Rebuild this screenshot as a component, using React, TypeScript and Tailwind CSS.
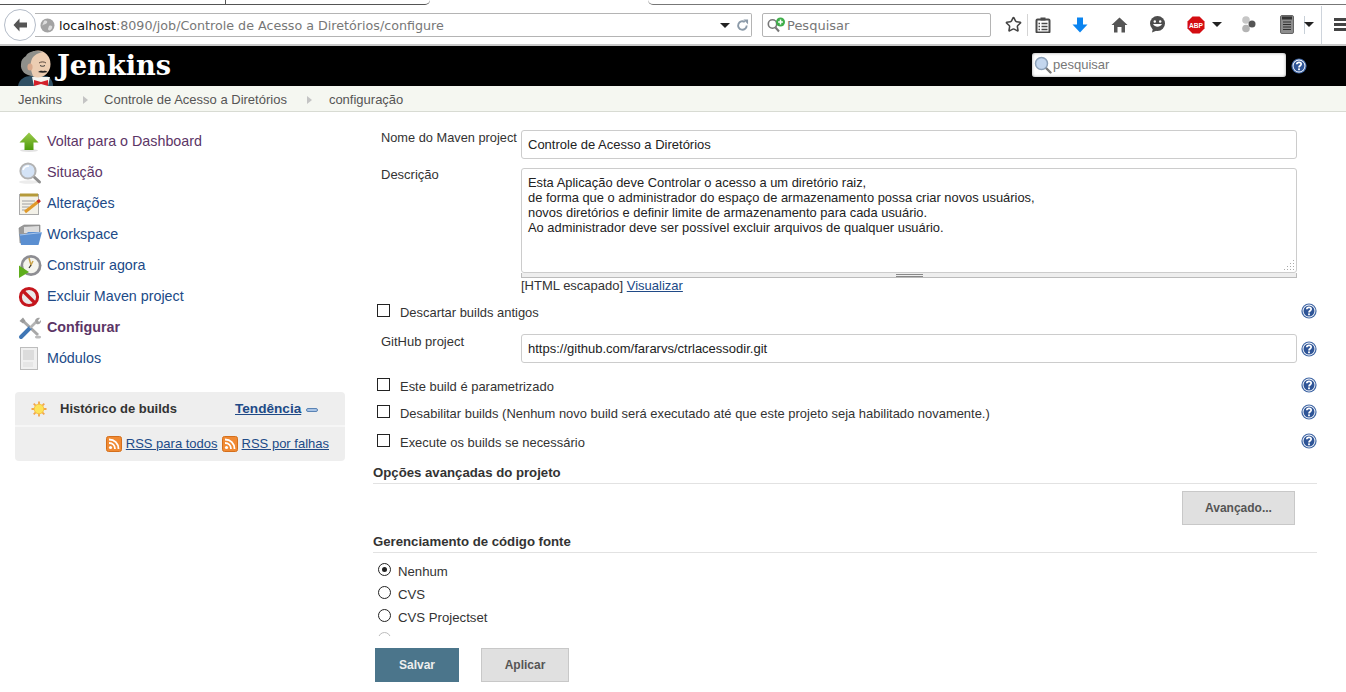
import { Star } from "lucide-react";
import type { ReactNode } from "react";

const sans = "font-['Liberation_Sans',Arial,sans-serif]";

function Butler() {
  return (
    <svg width="36" height="36" viewBox="0 0 36 36" className="block">
      <path d="M1 36 C2 29 8 26 14 26 L30 26 C34 28 36 32 36 36 Z" fill="#2f4f63" />
      <path d="M15 27 L33 27 L31 36 L17 36 Z" fill="#f4f4f0" />
      <path d="M17 30 L24 32 L31 30 L31 36 L24 34 L17 36 Z" fill="#d3202a" />
      <ellipse cx="21" cy="14" rx="12.5" ry="13.5" fill="#eccdb2" />
      <path d="M9 6 C11 1 20 0 26 2 C20 3 15 6 14 12 C13 15 14 21 16 26 C9 26 3 21 4 14 C4 10 6 8 9 6 Z" fill="#8f8f8a" />
      <ellipse cx="13" cy="17" rx="2.6" ry="3.6" fill="#d9a98c" />
      <path d="M22 13 C24 11.5 27 11.5 29 13" stroke="#4a3a30" strokeWidth="0.9" fill="none" />
      <path d="M23 15.5 C24.5 16.5 26.5 16.5 28 15.5" stroke="#333" strokeWidth="1" fill="none" />
      <path d="M21 22 C23 20.5 25 20.5 26 21.2 C27.5 20.5 29 20.5 30.5 22 C28 22.8 24 23 21 22 Z" fill="#222" />
    </svg>
  );
}

function Help() {
  return (
    <svg width="16" height="16" viewBox="0 0 16 16" className="block shrink-0">
      <circle cx="8" cy="8" r="7.6" fill="#3f66a5" />
      <circle cx="8" cy="8" r="6.4" fill="#fff" />
      <circle cx="8" cy="8" r="5.5" fill="#2f5597" />
      <path d="M5.8 6.2 C5.9 3.7 10.2 3.7 10.2 6.1 C10.2 7.8 8 7.7 8 9.4" stroke="#fff" strokeWidth="1.7" fill="none" />
      <rect x="7.1" y="10.4" width="1.8" height="1.8" fill="#fff" />
    </svg>
  );
}

function Rss() {
  return (
    <svg width="16" height="16" viewBox="0 0 16 16" className="block shrink-0">
      <rect x="0.5" y="0.5" width="15" height="15" rx="2" fill="#f08a33" stroke="#d46f1c" />
      <circle cx="4.5" cy="11.5" r="1.6" fill="#fff" />
      <path d="M3 7 C6.5 7 9 9.5 9 13" stroke="#fff" strokeWidth="1.8" fill="none" />
      <path d="M3 3.5 C8.5 3.5 12.5 7.5 12.5 13" stroke="#fff" strokeWidth="1.8" fill="none" />
    </svg>
  );
}

function SideIcon({ name }: { name: string }) {
  if (name === "up")
    return (
      <svg width="24" height="24" viewBox="0 0 24 24">
        <defs>
          <linearGradient id="upg" x1="0" y1="0" x2="0" y2="1">
            <stop offset="0" stopColor="#9ccc4c" />
            <stop offset="1" stopColor="#4c9a0a" />
          </linearGradient>
        </defs>
        <ellipse cx="11" cy="20.5" rx="9" ry="1.5" fill="#e2e2e2" />
        <path d="M11 2.5 L20.5 12.5 L15.5 12.5 L15.5 20 L6.5 20 L6.5 12.5 L1.5 12.5 Z" fill="url(#upg)" />
      </svg>
    );
  if (name === "search")
    return (
      <svg width="24" height="24" viewBox="0 0 24 24">
        <ellipse cx="11" cy="21" rx="10" ry="1.8" fill="#ececec" />
        <path d="M15 15 L21.5 21" stroke="#8f8f8f" strokeWidth="3" strokeLinecap="round" />
        <circle cx="10" cy="10" r="7.6" fill="#d4e3f6" stroke="#b3b3b3" strokeWidth="2" />
        <path d="M5 9 C6 6 8 5 11 5" stroke="#fff" strokeWidth="1.6" fill="none" />
      </svg>
    );
  if (name === "notes")
    return (
      <svg width="24" height="24" viewBox="0 0 24 24">
        <rect x="1.5" y="2.5" width="19" height="20" fill="#f3f1e8" stroke="#a9a9a9" />
        <rect x="2" y="1.5" width="18" height="3" fill="#b59a3a" />
        <path d="M4 9 H17 M4 12 H15 M4 15 H11 M4 18 H9" stroke="#a0a0a0" />
        <path d="M7 20 L21 9" stroke="#e09a2a" strokeWidth="3" />
        <path d="M19.5 10.2 L22 8.2" stroke="#c9302c" strokeWidth="3" />
      </svg>
    );
  if (name === "folder")
    return (
      <svg width="24" height="24" viewBox="0 0 24 24">
        <path d="M1 5 L6 2 L22 2 L22 12 L2 20 Z" fill="#9a9a9a" stroke="#808080" strokeWidth="0.6" />
        <path d="M6 4 L21 3 L21 10 L6 10 Z" fill="#dcdcdc" />
        <path d="M3 22 L1.5 11 L8 11 L10 9 L24 9 L20.5 22 Z" fill="#5b8fd1" />
        <path d="M2 12 L24 9.5" stroke="#a8c6ec" />
      </svg>
    );
  if (name === "build")
    return (
      <svg width="24" height="24" viewBox="0 0 24 24">
        <circle cx="13" cy="11.5" r="10.5" fill="#8d8d92" />
        <circle cx="13" cy="11.5" r="7.8" fill="#f4f4ee" />
        <path d="M11 4 L13 11 L15 7" stroke="#c9a34a" strokeWidth="1.5" fill="none" />
        <path d="M13 11 L11 14" stroke="#333" strokeWidth="1.2" />
        <path d="M1 11.5 L11 18 L1 24 Z" fill="#5fae1c" />
      </svg>
    );
  if (name === "delete")
    return (
      <svg width="24" height="24" viewBox="0 0 24 24">
        <circle cx="11" cy="12" r="8.6" fill="#e9e9e9" stroke="#c5161d" strokeWidth="3" />
        <path d="M5 6 L17 18" stroke="#c5161d" strokeWidth="3.2" />
      </svg>
    );
  if (name === "config")
    return (
      <svg width="24" height="24" viewBox="0 0 24 24">
        <path d="M4 4 L20 19" stroke="#a8a8a8" strokeWidth="3" />
        <path d="M1.5 5 L5 1.5 L7.5 5 L5 7.5 Z" fill="#9b9b9b" />
        <path d="M3 21 L12 12" stroke="#3f76b5" strokeWidth="4" strokeLinecap="round" />
        <path d="M12 12 L19 5" stroke="#b4b4b4" strokeWidth="2.6" />
        <path d="M17 5 C17 2.5 20 1 22 2 L20 4.5 L21 6 L23 4 C23.5 7 21 9 18.5 8 Z" fill="#a2a2a2" />
        <ellipse cx="20" cy="21" rx="3" ry="1.5" fill="#bcbcbc" />
      </svg>
    );
  return (
    <svg width="24" height="24" viewBox="0 0 24 24">
      <rect x="2.5" y="0.5" width="17" height="22" fill="#f0f0f0" stroke="#bdbdbd" />
      <rect x="5" y="3" width="11" height="10" fill="#dcdcdc" />
      <rect x="5" y="15" width="10" height="5" fill="#e6e6e6" />
    </svg>
  );
}

function Sun() {
  return (
    <svg width="16" height="16" viewBox="0 0 16 16" className="block">
      <path d="M8 0.5 V15.5 M0.5 8 H15.5 M2.7 2.7 L13.3 13.3 M13.3 2.7 L2.7 13.3" stroke="#f2a54a" strokeWidth="1.8" />
      <circle cx="8" cy="8" r="4.8" fill="#fde35a" stroke="#f5c542" />
    </svg>
  );
}

function SideItem({ icon, label, color, bold }: { icon: string; label: string; color: string; bold?: boolean }) {
  return (
    <div className="flex h-[31px] items-center gap-[5px] pl-[3px]">
      <SideIcon name={icon} />
      <span className={`text-[14.3px] ${color} ${bold ? "font-bold" : ""}`}>{label}</span>
    </div>
  );
}

function Tool({ w, children }: { w: string; children: ReactNode }) {
  return <div className={`flex shrink-0 items-center justify-center ${w}`}>{children}</div>;
}

function Caret() {
  return <div className="h-0 w-0 border-x-[5px] border-t-[5px] border-x-transparent border-t-[#222]" />;
}

function Field({ children, className }: { children: ReactNode; className: string }) {
  return (
    <div className={`flex h-[29px] w-[776px] items-center rounded-[3px] border border-[#ccc] px-[6px] text-[13px] text-[#222] ${className}`}>
      {children}
    </div>
  );
}

function CheckRow({ label, className }: { label: string; className: string }) {
  return (
    <div className={`flex h-[26px] items-center pl-1 ${className}`}>
      <span className="h-[13px] w-[13px] shrink-0 -translate-y-[1px] border border-[#222] bg-white" />
      <span className="ml-[10px] flex-1 translate-y-[2px] text-[12.95px] text-[#333]">{label}</span>
      <Help />
    </div>
  );
}

function Radio({ label, on, dim }: { label?: string; on?: boolean; dim?: boolean }) {
  return (
    <div className={`flex h-[23px] items-center pl-[5px] ${dim ? "opacity-30" : ""}`}>
      <span className="flex h-[13px] w-[13px] -translate-y-[1px] items-center justify-center rounded-full border border-[#222] bg-white">
        {on && <span className="h-[5px] w-[5px] rounded-full bg-[#222]" />}
      </span>
      {label && <span className="ml-[7px] translate-y-[1px] text-[13.2px] text-[#333]">{label}</span>}
    </div>
  );
}

function SectionHead({ label, className }: { label: string; className: string }) {
  return (
    <div className={`flex h-[22px] items-start border-b border-[#e2e2e2] pt-[3px] text-[13.2px] font-bold leading-[15px] text-[#333] ${className}`}>
      {label}
    </div>
  );
}

function Browser() {
  return (
    <>
      <div className="flex h-[5px]">
        <div className="h-[5px] w-[225px] border-b border-[#555]" />
        <div className="h-[5px] w-px bg-[#555]" />
        <div className="h-[5px] w-[204px] rounded-br-[6px] border-b border-[#555]" />
        <div className="w-[218px]" />
        <div className="h-[5px] flex-1 rounded-bl-[6px] border-b border-[#777]" />
      </div>
      <div className="flex h-[41px] items-start border-b-2 border-[#c8c8c8] bg-white">
        <div className="z-10 mt-[4px] flex h-[32px] w-[32px] translate-x-[4px] items-center justify-center rounded-full border border-[#b4bcc8] bg-white">
          <svg width="18" height="18" viewBox="0 0 18 18">
            <path d="M8.5 2.5 L2.5 9 L8.5 15.5 L8.5 11.5 L16 11.5 L16 6.5 L8.5 6.5 Z" fill="#555" />
          </svg>
        </div>
        <div className="ml-[3px] mt-[8px] flex h-[24px] w-[717px] items-center rounded-r-[2px] border border-l-0 border-[#b4b4b4] pl-[6px] pt-px font-['DejaVu_Sans',sans-serif] text-[12.7px] text-[#777]">
          <svg width="15" height="15" viewBox="0 0 15 15" className="ml-[-1px] mr-[4px] shrink-0">
            <circle cx="7.5" cy="7.5" r="7" fill="#a3a3a3" />
            <path d="M4 3 C6 2 8 3 7 5 C5 7 3 6 2 8 Z M9 8 C11 7 13 8 12 10 C11 13 8 13 8 11 Z" fill="#dcdcdc" />
          </svg>
          <span className="text-[#111]">localhost</span>
          <span>:8090/job/Controle de Acesso a Diretórios/configure</span>
          <div className="ml-auto mr-[2px] flex items-center gap-[6px]">
            <Caret />
            <svg width="13" height="13" viewBox="0 0 14 14">
              <path d="M11.5 7 A4.6 4.6 0 1 1 9.5 3.2" stroke="#8b9aa8" strokeWidth="2" fill="none" />
              <path d="M8 0.5 L13 0.5 L13 6 Z" fill="#8b9aa8" />
            </svg>
          </div>
        </div>
        <div className="ml-[10px] mt-[8px] flex h-[24px] w-[229px] items-center rounded-[2px] border border-[#b4b4b4] pl-[3px] pt-px font-['DejaVu_Sans',sans-serif] text-[13px] text-[#777]">
          <svg width="20" height="17" viewBox="0 0 20 17" className="mr-[1px] shrink-0">
            <circle cx="6.5" cy="7" r="4.2" fill="none" stroke="#777" strokeWidth="1.6" />
            <path d="M9.5 10.5 L13 14.5" stroke="#777" strokeWidth="2" />
            <circle cx="14.5" cy="5" r="4.5" fill="#3fae49" />
            <path d="M14.5 2.6 V7.4 M12.1 5 H16.9" stroke="#fff" strokeWidth="1.5" />
          </svg>
          Pesquisar
        </div>
        <div className="ml-[8px] flex h-[39px] flex-1 items-center overflow-hidden">
          <Tool w="w-[28px]"><Star size={17} strokeWidth={2.2} color="#444" /></Tool>
          <div className="h-[22px] w-px bg-[#d4d4d4]" />
          <Tool w="w-[31px]">
            <svg width="16" height="16" viewBox="0 0 16 16">
              <rect x="1.5" y="2.5" width="13" height="13" rx="1" fill="#fff" stroke="#4a4a4a" strokeWidth="2" />
              <rect x="5.5" y="0.5" width="5" height="3" fill="#4a4a4a" />
              <path d="M3.5 6.5 H5 M6.5 6.5 H12.5 M3.5 9.5 H5 M6.5 9.5 H12.5 M3.5 12.5 H5 M6.5 12.5 H12.5" stroke="#4a4a4a" strokeWidth="1.6" />
            </svg>
          </Tool>
          <Tool w="w-[44px]">
            <svg width="16" height="16" viewBox="0 0 16 16">
              <path d="M5 0.5 H11 V7.5 H15.5 L8 15.5 L0.5 7.5 H5 Z" fill="#0a84f0" />
            </svg>
          </Tool>
          <Tool w="w-[34px]">
            <svg width="17" height="16" viewBox="0 0 17 16">
              <path d="M8.5 0.5 L16.5 8 L14 8 L14 15.5 L10.5 15.5 L10.5 10 L6.5 10 L6.5 15.5 L3 15.5 L3 8 L0.5 8 Z" fill="#555" />
            </svg>
          </Tool>
          <Tool w="w-[42px]">
            <svg width="17" height="17" viewBox="0 0 17 17">
              <circle cx="8.5" cy="7.5" r="7.5" fill="#4d4d4d" />
              <path d="M4 12 L3 16.5 L9 14 Z" fill="#4d4d4d" />
              <circle cx="5.8" cy="5.5" r="1.2" fill="#fff" />
              <circle cx="11.2" cy="5.5" r="1.2" fill="#fff" />
              <path d="M4 8 C6 11.5 11 11.5 13 8 Z" fill="#fff" />
            </svg>
          </Tool>
          <Tool w="ml-px w-[34px]">
            <svg width="18" height="18" viewBox="0 0 18 18">
              <path d="M5.5 0.5 H12.5 L17.5 5.5 V12.5 L12.5 17.5 H5.5 L0.5 12.5 V5.5 Z" fill="#d40d12" />
              <text x="9" y="11.8" textAnchor="middle" fontSize="8" fontWeight="700" fill="#fff" fontFamily="Liberation Sans, sans-serif" textLength="14" lengthAdjust="spacingAndGlyphs">ABP</text>
            </svg>
          </Tool>
          <Tool w="w-[8px]"><Caret /></Tool>
          <Tool w="w-[54px]">
            <svg width="15" height="17" viewBox="0 0 15 17">
              <circle cx="5" cy="4" r="3.8" fill="#c6c6c6" />
              <circle cx="5" cy="12.5" r="3.8" fill="#b4b4b4" />
              <circle cx="11" cy="8" r="3.5" fill="#555" />
            </svg>
          </Tool>
          <Tool w="w-[24px]">
            <svg width="14" height="19" viewBox="0 0 14 19">
              <rect x="0.5" y="0.5" width="13" height="18" rx="1.5" fill="#8d8d8d" stroke="#666" />
              <rect x="2" y="1.5" width="10" height="3" fill="#333" />
              <path d="M3 7 H11 M3 9.5 H11 M3 12 H11 M3 14.5 H11" stroke="#2f2f2f" />
            </svg>
          </Tool>
          <div className="ml-[5px] h-[18px] w-px bg-[#c8d0d8]" />
          <Tool w="w-[8px]"><Caret /></Tool>
          <div className="ml-[8px] h-[38px] w-px bg-[#ced4dc]" />
          <div className="ml-[13px] flex w-[12px] shrink-0 flex-col gap-[2px]">
            <div className="h-[3px] bg-[#444]" />
            <div className="h-[3px] bg-[#444]" />
            <div className="h-[3px] bg-[#444]" />
          </div>
        </div>
      </div>
    </>
  );
}

export default function App() {
  return (
    <div className={`h-[692px] w-full overflow-hidden bg-white ${sans}`}>
      <Browser />

      <header className="flex h-[40px] items-stretch bg-black pl-[17px]">
        <div className="mt-[4px]"><Butler /></div>
        <span className="ml-[4px] mt-[2px] font-['DejaVu_Serif',serif] text-[27.2px] font-bold leading-[34px] text-white">Jenkins</span>
        <div className="ml-auto mr-[39px] flex items-center">
          <div className="flex h-[24px] w-[254px] -translate-y-px items-center rounded-[3px] bg-white pl-[2px] text-[13px] text-[#777] shadow-[inset_0_0_3px_#999]">
            <svg width="18" height="18" viewBox="0 0 18 18" className="mr-[1px]">
              <path d="M11 11 L16.5 16.5" stroke="#777" strokeWidth="2.4" strokeLinecap="round" />
              <circle cx="7.5" cy="7.5" r="6" fill="#c3d6ee" stroke="#8ba0b8" strokeWidth="1.5" />
            </svg>
            pesquisar
          </div>
          <div className="ml-[5px]"><Help /></div>
        </div>
      </header>

      <nav className="flex h-[26px] items-center border-b border-[#d8dbd3] bg-[#f5f7f1] pl-[18px] pt-[2px] text-[13px] text-[#555]">
        <span>Jenkins</span>
        <span className="ml-[21px] mr-[16px] h-0 w-0 border-y-[4px] border-l-[5px] border-y-transparent border-l-[#c4c4c4]" />
        <span>Controle de Acesso a Diretórios</span>
        <span className="ml-[20px] mr-[17px] h-0 w-0 border-y-[4px] border-l-[5px] border-y-transparent border-l-[#c4c4c4]" />
        <span>configuração</span>
      </nav>

      <div className="flex">
        <aside className="w-[373px] shrink-0 pl-[15px] pt-[14px]">
          <SideItem icon="up" label="Voltar para o Dashboard" color="text-[#5c3566]" />
          <SideItem icon="search" label="Situação" color="text-[#5c3566]" />
          <SideItem icon="notes" label="Alterações" color="text-[#204a87]" />
          <SideItem icon="folder" label="Workspace" color="text-[#204a87]" />
          <SideItem icon="build" label="Construir agora" color="text-[#204a87]" />
          <SideItem icon="delete" label="Excluir Maven project" color="text-[#204a87]" />
          <SideItem icon="config" label="Configurar" color="text-[#5c3566]" bold />
          <SideItem icon="modules" label="Módulos" color="text-[#204a87]" />

          <section className="mt-[18px] h-[69px] w-[330px] rounded-[4px] bg-[#eeeeee]">
            <div className="flex h-[35px] items-center border-b-2 border-[#f6f6f6] pl-4 pt-px">
              <Sun />
              <span className="ml-[13px] text-[13px] font-bold text-[#333]">Histórico de builds</span>
              <span className="ml-[58px] text-[13.6px] font-bold text-[#204a87] underline">Tendência</span>
              <span className="ml-[5px] h-[4px] w-[12px] translate-y-[1px] rounded-[2px] border border-[#5a83b4] bg-[#a9c4e6]" />
            </div>
            <div className="flex h-[34px] items-center justify-end gap-[4px] pr-4 text-[13px] text-[#204a87] underline">
              <Rss />
              <span>RSS para todos</span>
              <Rss />
              <span>RSS por falhas</span>
            </div>
          </section>
        </aside>

        <main className="w-[944px] shrink-0">
          <div className="h-[524px] overflow-hidden">
            <div className="mt-[18px] flex">
              <div className="w-[148px] pl-2 text-[12.8px] leading-[15px] text-[#333]">Nome do Maven project</div>
              <Field className="bg-white">Controle de Acesso a Diretórios</Field>
            </div>

            <div className="mt-[9px] flex">
              <div className="-mt-px w-[148px] pl-2 text-[13px] leading-[15px] text-[#333]">Descrição</div>
              <div className="w-[776px]">
                <div className="relative h-[105px] whitespace-pre-line rounded-[3px] border border-[#ccc] px-[6px] pt-[6px] text-[12.9px] leading-[15px] text-[#222]">
                  {"Esta Aplicação deve Controlar o acesso a um diretório raiz,\nde forma que o administrador do espaço de armazenamento possa criar novos usuários,\nnovos diretórios e definir limite de armazenamento para cada usuário.\nAo administrador deve ser possível excluir arquivos de qualquer usuário."}
                  <svg width="12" height="12" viewBox="0 0 12 12" className="absolute bottom-[1px] right-[1px]">
                    <path d="M10 1.5 H11 M7 4.5 H8 M10 4.5 H11 M4 7.5 H5 M7 7.5 H8 M10 7.5 H11 M1 10.5 H2 M4 10.5 H5 M7 10.5 H8 M10 10.5 H11" stroke="#aaa" />
                  </svg>
                </div>
                <div className="flex h-[5px] items-center justify-center border-x border-b border-[#bbb] bg-[#eeeeee]">
                  <div className="h-[3px] w-[27px] border-y border-[#888]" />
                </div>
                <div className="h-[15px] text-[13px] leading-[15px] text-[#333]">
                  [HTML escapado] <span className="text-[#204a87] underline">Visualizar</span>
                </div>
              </div>
            </div>

            <CheckRow label="Descartar builds antigos" className="mt-[5px]" />

            <div className="mt-[10px] flex items-center">
              <div className="w-[148px] self-start pl-2 text-[13px] leading-[15px] text-[#333]">GitHub project</div>
              <Field className="bg-white">https://github.com/fararvs/ctrlacessodir.git</Field>
              <div className="ml-1"><Help /></div>
            </div>

            <CheckRow label="Este build é parametrizado" className="mt-[9px]" />
            <CheckRow label="Desabilitar builds (Nenhum novo build será executado até que este projeto seja habilitado novamente.)" className="mt-px" />
            <CheckRow label="Execute os builds se necessário" className="mt-[3px]" />

            <SectionHead label="Opções avançadas do projeto" className="mt-[8px]" />
            <div className="mt-[7px] flex justify-end pr-[22px]">
              <button className="h-[34px] w-[113px] border border-[#c8c8c8] bg-[#e0e0e0] text-[12px] font-bold text-[#555]">Avançado...</button>
            </div>

            <SectionHead label="Gerenciamento de código fonte" className="mt-[6px]" />
            <div className="mt-[6px]">
              <Radio label="Nenhum" on />
              <Radio label="CVS" />
              <Radio label="CVS Projectset" />
              <Radio dim />
            </div>
          </div>

          <div className="ml-[2px] mt-[12px] flex gap-[22px]">
            <button className="h-[34px] w-[84px] border border-[#4b758b] bg-[#4b758b] text-[12px] font-bold text-[#eeeeee]">Salvar</button>
            <button className="h-[34px] w-[88px] border border-[#c8c8c8] bg-[#e0e0e0] text-[12px] font-bold text-[#555]">Aplicar</button>
          </div>
        </main>
      </div>
    </div>
  );
}
